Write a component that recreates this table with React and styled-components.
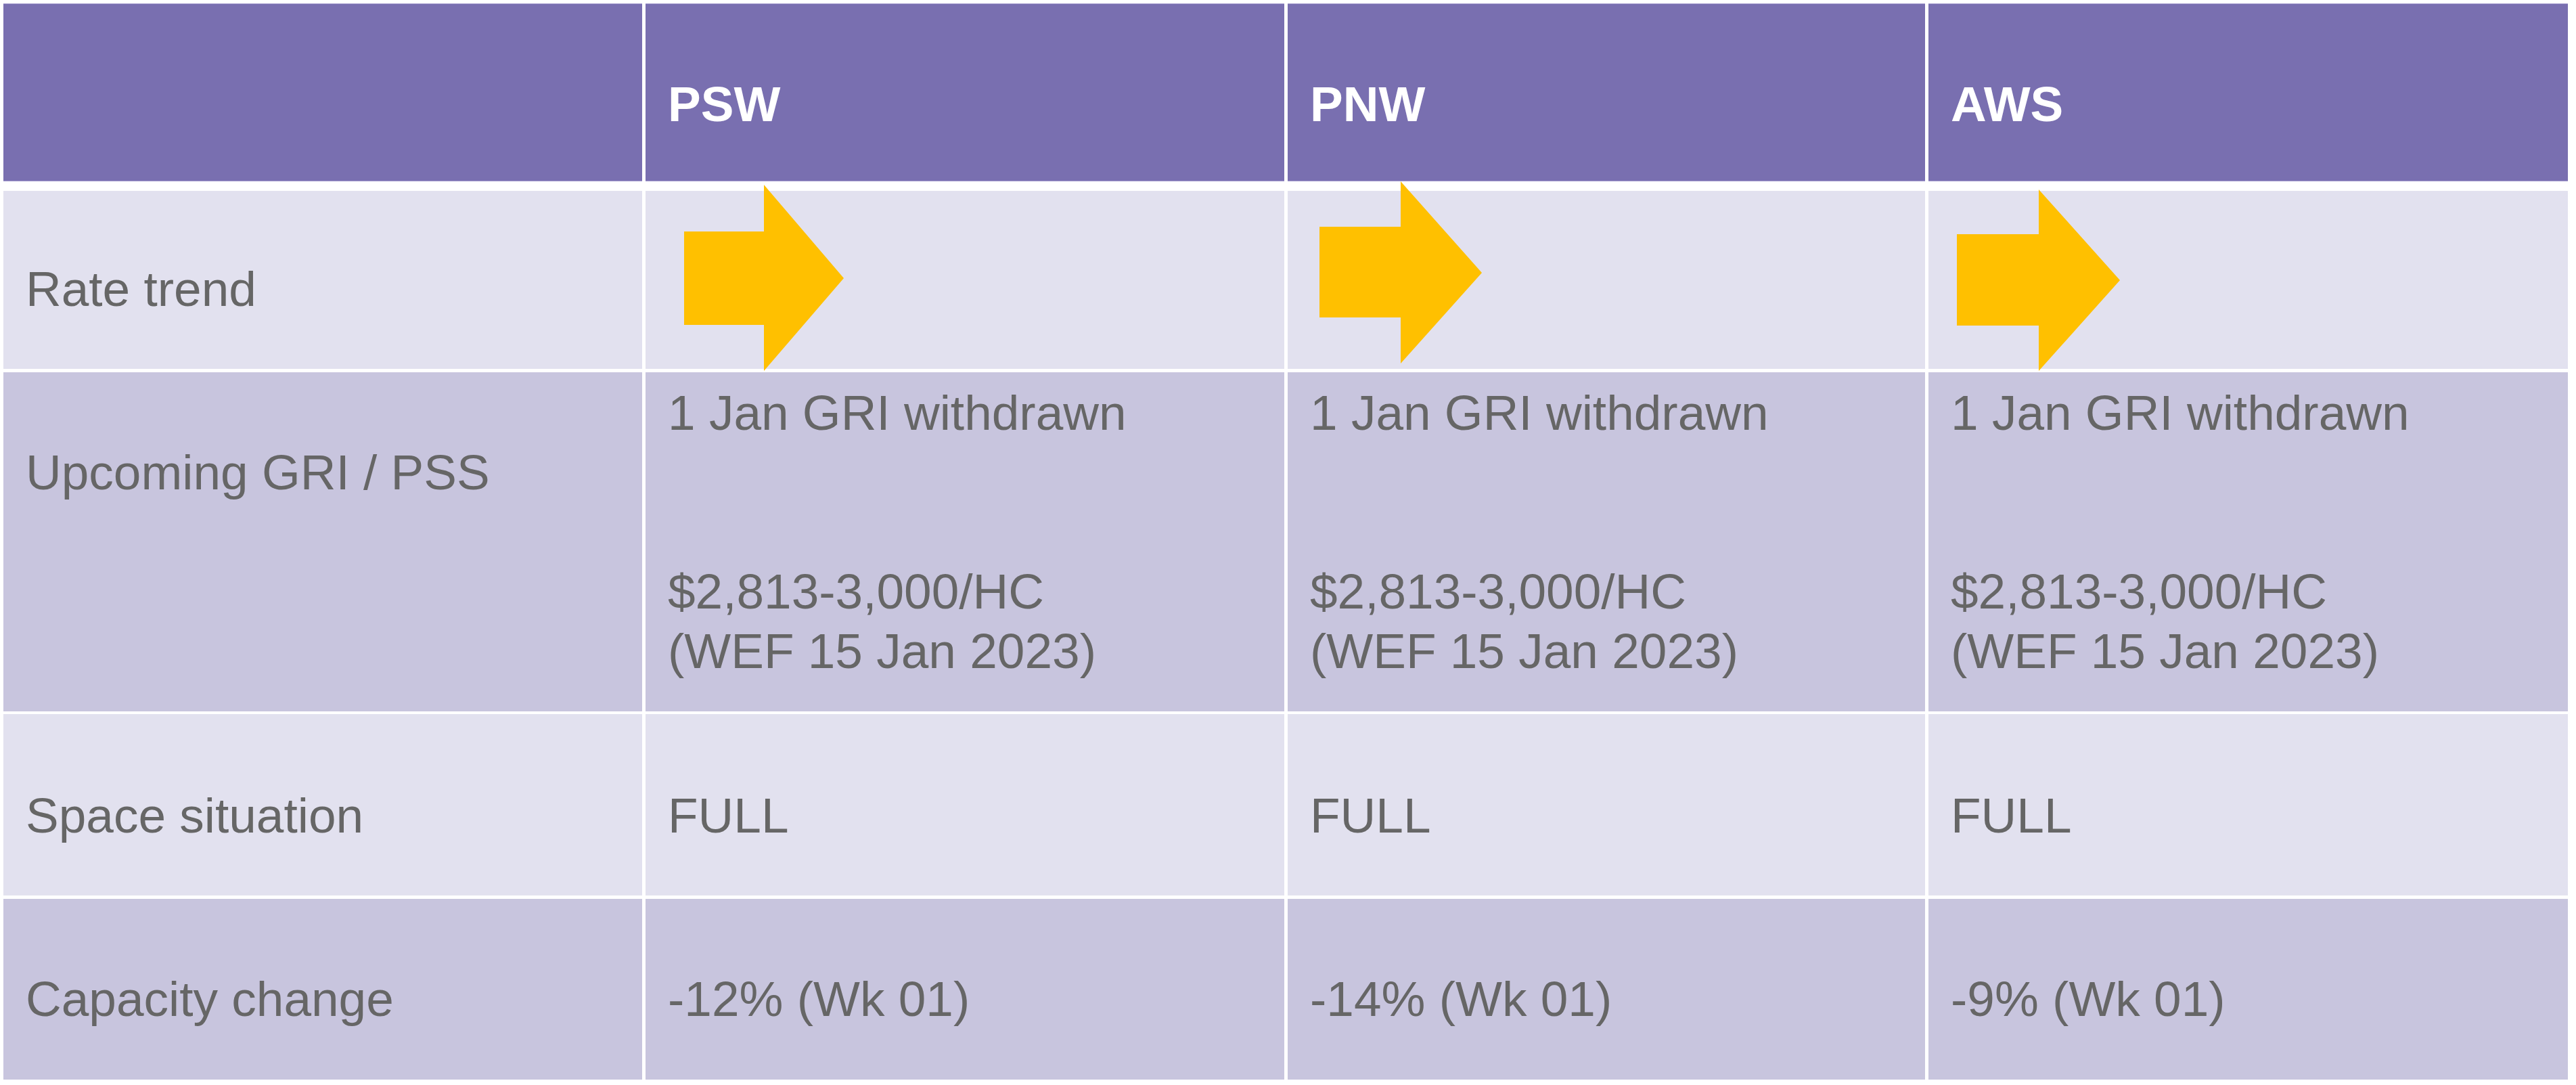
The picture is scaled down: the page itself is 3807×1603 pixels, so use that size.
import React from "react";
import styled, { createGlobalStyle } from "styled-components";

const GlobalStyle = createGlobalStyle`
  html, body {
    margin: 0;
    padding: 0;
    background: #ffffff;
  }
  body {
    font-family: "Liberation Sans", Arial, sans-serif;
  }
`;

const Page = styled.div`
  padding: 5px;
`;

const Table = styled.div`
  width: 3790px;
  display: flex;
  flex-direction: column;
`;

const Row = styled.div`
  display: grid;
  grid-template-columns: 944px 944px 942px 945px;
  column-gap: 5px;
  height: ${(p) => p.$h}px;
  margin-top: ${(p) => p.$gap || 0}px;
`;

const Cell = styled.div`
  position: relative;
  box-sizing: border-box;
  background: ${(p) => p.$bg};
  padding: ${(p) => p.$pad}px 20px 0 33px;
  font-size: 73px;
  line-height: 88px;
  color: #666666;
  white-space: nowrap;
`;

const HeadCell = styled(Cell)`
  color: #ffffff;
  font-weight: 700;
  box-shadow: inset 0 1px 0 rgba(200, 195, 230, 0.6), inset 0 -1px 0 rgba(200, 195, 230, 0.6);
`;

const Line = styled.div`
  height: 88px;
`;

const Spacer = styled.div`
  height: ${(p) => p.$lines * 88}px;
`;

const ArrowSvg = styled.svg`
  position: absolute;
  left: ${(p) => p.$x}px;
  top: ${(p) => p.$y}px;
  width: ${(p) => p.$w}px;
  height: ${(p) => p.$h}px;
  overflow: visible;
  z-index: 2;
`;

const PURPLE = "#796FB0";
const LIGHT = "#E2E1EF";
const DARK = "#C8C5DE";
const YELLOW = "#FFC000";

function Arrow({ x, y, w, h, base, s1, s2, tip }) {
  const pts = `0,${s1} ${base},${s1} ${base},0 ${w},${tip} ${base},${h} ${base},${s2} 0,${s2}`;
  return (
    <ArrowSvg $x={x} $y={y} $w={w} $h={h} viewBox={`0 0 ${w} ${h}`}>
      <polygon points={pts} fill={YELLOW} />
    </ArrowSvg>
  );
}

const ports = ["PSW", "PNW", "AWS"];

const arrows = [
  { x: 57, y: -9, w: 236, h: 275, base: 118, s1: 69, s2: 207, tip: 138 },
  { x: 47, y: -14, w: 240, h: 269, base: 120, s1: 67, s2: 201, tip: 135 },
  { x: 42, y: -2, w: 241, h: 268, base: 121, s1: 66, s2: 201, tip: 134 },
];

const capacity = ["-12% (Wk 01)", "-14% (Wk 01)", "-9% (Wk 01)"];

export default function App() {
  return (
    <>
      <GlobalStyle />
      <Page>
        <Table>
          <Row $h={263}>
            <HeadCell $bg={PURPLE} $pad={105} />
            {ports.map((p) => (
              <HeadCell key={p} $bg={PURPLE} $pad={105}>
                {p}
              </HeadCell>
            ))}
          </Row>

          <Row $h={263} $gap={14}>
            <Cell $bg={LIGHT} $pad={101}>Rate trend</Cell>
            {arrows.map((a, i) => (
              <Cell key={i} $bg={LIGHT} $pad={101}>
                <Arrow {...a} />
              </Cell>
            ))}
          </Row>

          <Row $h={501} $gap={5}>
            <Cell $bg={DARK} $pad={104}>Upcoming GRI / PSS</Cell>
            {ports.map((p) => (
              <Cell key={p} $bg={DARK} $pad={16}>
                <Line>1 Jan GRI withdrawn</Line>
                <Spacer $lines={2} />
                <Line>$2,813-3,000/HC</Line>
                <Line>(WEF 15 Jan 2023)</Line>
              </Cell>
            ))}
          </Row>

          <Row $h={268} $gap={4}>
            <Cell $bg={LIGHT} $pad={106}>Space situation</Cell>
            {ports.map((p) => (
              <Cell key={p} $bg={LIGHT} $pad={106}>
                FULL
              </Cell>
            ))}
          </Row>

          <Row $h={267} $gap={5}>
            <Cell $bg={DARK} $pad={104}>Capacity change</Cell>
            {capacity.map((c) => (
              <Cell key={c} $bg={DARK} $pad={104}>
                {c}
              </Cell>
            ))}
          </Row>
        </Table>
      </Page>
    </>
  );
}
